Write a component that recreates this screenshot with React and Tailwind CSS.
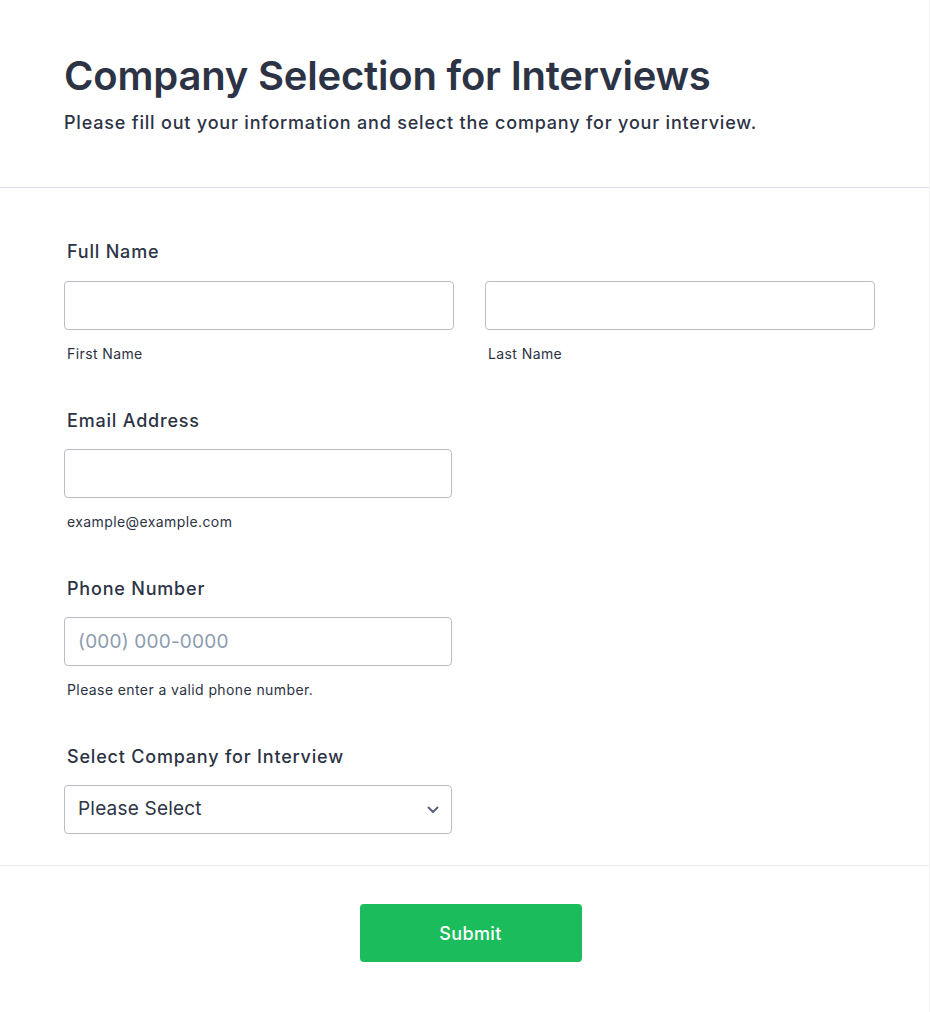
import React from 'react';

const Field = ({ label, children, sub, className = '' }) => (
  <div className={className}>
    <label className="block px-[3px] text-[18px] leading-6 font-medium tracking-[0.8px] text-[#2c3345]">{label}</label>
    {children}
    {sub && <p className="mt-[14px] px-[3px] text-[14px] leading-5 tracking-[0.4px] text-[#2c3345]">{sub}</p>}
  </div>
);

const inputCls =
  'block w-full h-[49px] rounded-[4px] border border-[#b8bdc9] bg-white px-[13px] text-[19px] tracking-[0.2px] text-[#2c3345] placeholder:text-[#8c9bb0] focus:outline-none';

export default function App() {
  return (
    <div className="min-h-[1012px] w-[930px] bg-white border-r border-b border-[#f1f1f4] font-['Inter',sans-serif] text-[#2c3345]">
      <header className="px-16 pt-[52px] pb-[52px] border-b border-[#dcdcec]">
        <h1 className="text-[40px] leading-[48px] font-semibold tracking-[-0.2px] text-[#2c3345]">
          Company Selection for Interviews
        </h1>
        <p className="mt-[11px] text-[18px] leading-6 font-medium tracking-[0.8px] text-[#2c3345]">
          Please fill out your information and select the company for your interview.
        </p>
      </header>

      <form className="pl-16 pr-[54px] pt-[52px] pb-[31px]" onSubmit={(e) => e.preventDefault()}>
        <div>
          <label className="block px-[3px] text-[18px] leading-6 font-medium tracking-[0.8px]">Full Name</label>
          <div className="mt-[17px] grid grid-cols-2 gap-[31px]">
            <div>
              <input type="text" className={inputCls} />
              <p className="mt-[14px] px-[3px] text-[14px] leading-5 tracking-[0.4px]">First Name</p>
            </div>
            <div>
              <input type="text" className={inputCls} />
              <p className="mt-[14px] px-[3px] text-[14px] leading-5 tracking-[0.4px]">Last Name</p>
            </div>
          </div>
        </div>

        <Field label="Email Address" sub="example@example.com" className="mt-[45px] w-[388px]">
          <input type="email" className={`${inputCls} mt-[16px]`} />
        </Field>

        <Field label="Phone Number" sub="Please enter a valid phone number." className="mt-[45px] w-[388px]">
          <input type="tel" placeholder="(000) 000-0000" className={`${inputCls} mt-[16px]`} />
        </Field>

        <Field label="Select Company for Interview" className="mt-[45px] w-[388px]">
          <div className="relative mt-[16px]">
            <select className={`${inputCls} appearance-none pr-10`} defaultValue="">
              <option value="">Please Select</option>
              <option>Company A</option>
              <option>Company B</option>
            </select>
            <svg
              className="pointer-events-none absolute right-[13px] top-1/2 -translate-y-1/2"
              width="12"
              height="8"
              viewBox="0 0 12 8"
              fill="none"
            >
              <path d="M1.5 1.5L6 6l4.5-4.5" stroke="#57647e" strokeWidth="2" strokeLinecap="round" strokeLinejoin="round" />
            </svg>
          </div>
        </Field>
      </form>

      <div className="border-t border-[#eaeaf0] pt-[38px] pb-[50px] pl-[12px] flex justify-center">
        <button
          type="submit"
          className="w-[222px] h-[58px] rounded-[4px] bg-[#1abc5c] text-white text-[18px] font-medium tracking-[0.4px]"
        >
          Submit
        </button>
      </div>
    </div>
  );
}
